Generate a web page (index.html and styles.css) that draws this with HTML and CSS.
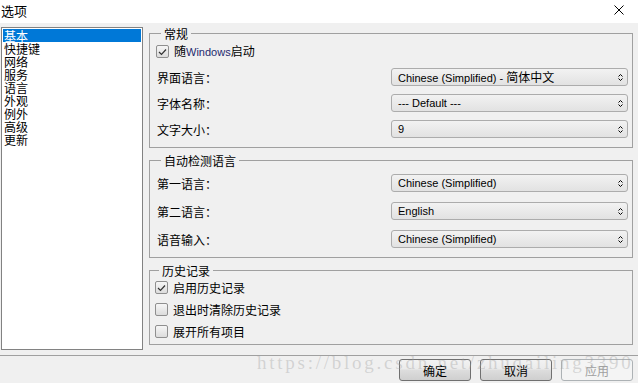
FILE: index.html
```html
<!DOCTYPE html>
<html lang="zh-CN">
<head>
<meta charset="utf-8">
<title>选项</title>
<link rel="stylesheet" href="styles.css">
</head>
<body>
<div class="window">
  <div class="titlebar">
    <span class="title">选项</span>
    <svg class="close" width="10" height="10" viewBox="0 0 10 10"><path d="M0.5 0.5L9.5 9.5M9.5 0.5L0.5 9.5" stroke="#000" stroke-width="1" fill="none"/></svg>
  </div>
  <div class="main">
    <ul class="nav">
      <li class="sel">基本</li>
      <li>快捷键</li>
      <li>网络</li>
      <li>服务</li>
      <li>语言</li>
      <li>外观</li>
      <li>例外</li>
      <li>高级</li>
      <li>更新</li>
    </ul>
    <div class="panel">
      <fieldset class="group g1">
        <legend>常规</legend>
        <label class="check first"><span class="box on"><svg width="9" height="8" viewBox="0 0 9 8"><path d="M1 4L3.5 6.5L8 1.5" stroke="#333" stroke-width="1.2" fill="none"/></svg></span><span>随<span class="latin win">Windows</span>启动</span></label>
        <div class="rows r1">
          <span class="lbl">界面语言：</span>
          <div class="combo"><span>Chinese (Simplified) - <span class="cjk">简体中文</span></span><svg width="5" height="9" viewBox="0 0 5 9"><path d="M0.5 3.5L2.5 1.5L4.5 3.5M0.5 5.5L2.5 7.5L4.5 5.5" stroke="#000" fill="none"/></svg></div>
          <span class="lbl">字体名称：</span>
          <div class="combo"><span>--- Default ---</span><svg width="5" height="9" viewBox="0 0 5 9"><path d="M0.5 3.5L2.5 1.5L4.5 3.5M0.5 5.5L2.5 7.5L4.5 5.5" stroke="#000" fill="none"/></svg></div>
          <span class="lbl">文字大小：</span>
          <div class="combo"><span>9</span><svg width="5" height="9" viewBox="0 0 5 9"><path d="M0.5 3.5L2.5 1.5L4.5 3.5M0.5 5.5L2.5 7.5L4.5 5.5" stroke="#000" fill="none"/></svg></div>
        </div>
      </fieldset>
      <fieldset class="group g2">
        <legend>自动检测语言</legend>
        <div class="rows r2">
          <span class="lbl">第一语言：</span>
          <div class="combo"><span>Chinese (Simplified)</span><svg width="5" height="9" viewBox="0 0 5 9"><path d="M0.5 3.5L2.5 1.5L4.5 3.5M0.5 5.5L2.5 7.5L4.5 5.5" stroke="#000" fill="none"/></svg></div>
          <span class="lbl">第二语言：</span>
          <div class="combo"><span>English</span><svg width="5" height="9" viewBox="0 0 5 9"><path d="M0.5 3.5L2.5 1.5L4.5 3.5M0.5 5.5L2.5 7.5L4.5 5.5" stroke="#000" fill="none"/></svg></div>
          <span class="lbl">语音输入：</span>
          <div class="combo"><span>Chinese (Simplified)</span><svg width="5" height="9" viewBox="0 0 5 9"><path d="M0.5 3.5L2.5 1.5L4.5 3.5M0.5 5.5L2.5 7.5L4.5 5.5" stroke="#000" fill="none"/></svg></div>
        </div>
      </fieldset>
      <fieldset class="group g3">
        <legend>历史记录</legend>
        <div class="checks">
          <label class="check"><span class="box on"><svg width="9" height="8" viewBox="0 0 9 8"><path d="M1 4L3.5 6.5L8 1.5" stroke="#333" stroke-width="1.2" fill="none"/></svg></span><span>启用历史记录</span></label>
          <label class="check"><span class="box"></span><span>退出时清除历史记录</span></label>
          <label class="check"><span class="box"></span><span>展开所有项目</span></label>
        </div>
      </fieldset>
    </div>
  </div>
  <div class="footer">
    <button class="btn">确定</button>
    <button class="btn">取消</button>
    <button class="btn" disabled>应用</button>
  </div>
  <div class="watermark">https://blog.csdn.net/zhuqailing3390</div>
</div>
</body>
</html>
```
FILE: styles.css
```css
* { box-sizing: border-box; }
html, body { margin: 0; padding: 0; }
body {
  width: 638px;
  height: 383px;
  overflow: hidden;
  background: #f0f0f0;
  font-family: "Noto Sans CJK SC", "Liberation Sans", sans-serif;
  font-size: 12px;
  color: #000;
}
.window {
  position: relative;
  width: 638px;
  height: 383px;
  display: flex;
  flex-direction: column;
}
.titlebar {
  height: 23px;
  background: #fff;
  display: flex;
  align-items: center;
  justify-content: space-between;
  padding: 0 14px 2px 1px;
}
.title { font-size: 13px; line-height: 15px; }
.close { margin-top: -2px; }
.main {
  height: 332px;
  display: flex;
  padding: 4px 5px 0 1px;
  gap: 6px;
}
.nav {
  list-style: none;
  margin: 0;
  padding: 1px 1px;
  width: 142px;
  height: 323px;
  background: #fff;
  border: 1px solid #828282;
}
.nav li {
  height: 13px;
  line-height: 13px;
  padding-left: 1px;
  font-size: 12px;
}
.nav li.sel { background: #0078d7; color: #fff; }
.panel {
  flex: 1;
  display: flex;
  flex-direction: column;
  gap: 6px;
}
.group {
  margin: 0;
  border: 1px solid #a0a0a0;
  border-radius: 0;
  padding: 0 4px 0 7px;
  min-width: 0;
}
.group legend {
  margin-left: 4px;
  padding: 0 3px;
  font-size: 12px;
  line-height: 13px;
  height: 13px;
}
.g1 { padding-bottom: 9px; }
.g2 { padding-top: 7px; padding-bottom: 9px; }
.g3 { padding-top: 4px; padding-bottom: 6px; padding-left: 5px; }
.check {
  display: flex;
  align-items: center;
  gap: 5px;
  height: 13px;
  line-height: 13px;
}
.check.first { margin-top: 5px; margin-left: -1px; }
.box {
  width: 13px;
  height: 13px;
  border: 1px solid #8f8f8f;
  border-radius: 2px;
  background: linear-gradient(#f6f6f6, #dcdcdc);
  display: flex;
  align-items: center;
  justify-content: center;
}
.checks { display: flex; flex-direction: column; gap: 9px; }
.latin { font-family: "Liberation Sans", sans-serif; font-size: 11px; }
.win { color: #1e2a6e; }
.rows {
  display: grid;
  grid-template-columns: 1fr 237px;
  align-items: center;
}
.r1 { margin-top: 10px; row-gap: 8px; }
.r2 { row-gap: 10px; }
.lbl { line-height: 13px; }
.combo {
  height: 18px;
  border: 1px solid #acacac;
  border-radius: 3px;
  background: linear-gradient(#f2f2f2, #e2e2e2);
  display: flex;
  align-items: center;
  justify-content: space-between;
  padding: 0 4px 0 6px;
  font-family: "Liberation Sans", sans-serif;
  font-size: 11px;
  line-height: 13px;
}
.cjk { font-family: "Noto Sans CJK SC", sans-serif; font-size: 12px; }
.footer {
  flex: 1;
  margin-top: 0;
  border-top: 1px solid #a0a0a0;
  display: flex;
  justify-content: flex-end;
  align-items: flex-start;
  gap: 9px;
  padding: 3px 5px 0 0;
}
.btn {
  width: 72px;
  height: 22px;
  border: 1px solid #707070;
  border-radius: 3px;
  background: linear-gradient(#f2f2f2 0%, #ebebeb 45%, #dddddd 50%, #cfcfcf 100%);
  font-family: "Noto Sans CJK SC", sans-serif;
  font-size: 12px;
  color: #000;
  padding: 0;
}
.btn:disabled { color: #a0a0a0; border-color: #adb2b5; background: #f4f4f4; }
.watermark {
  position: absolute;
  left: 257px;
  top: 352px;
  font-family: "Liberation Serif", serif;
  font-size: 19px;
  letter-spacing: 2.75px;
  line-height: 22px;
  color: rgba(160,160,160,0.38);
  white-space: nowrap;
  pointer-events: none;
}
```
